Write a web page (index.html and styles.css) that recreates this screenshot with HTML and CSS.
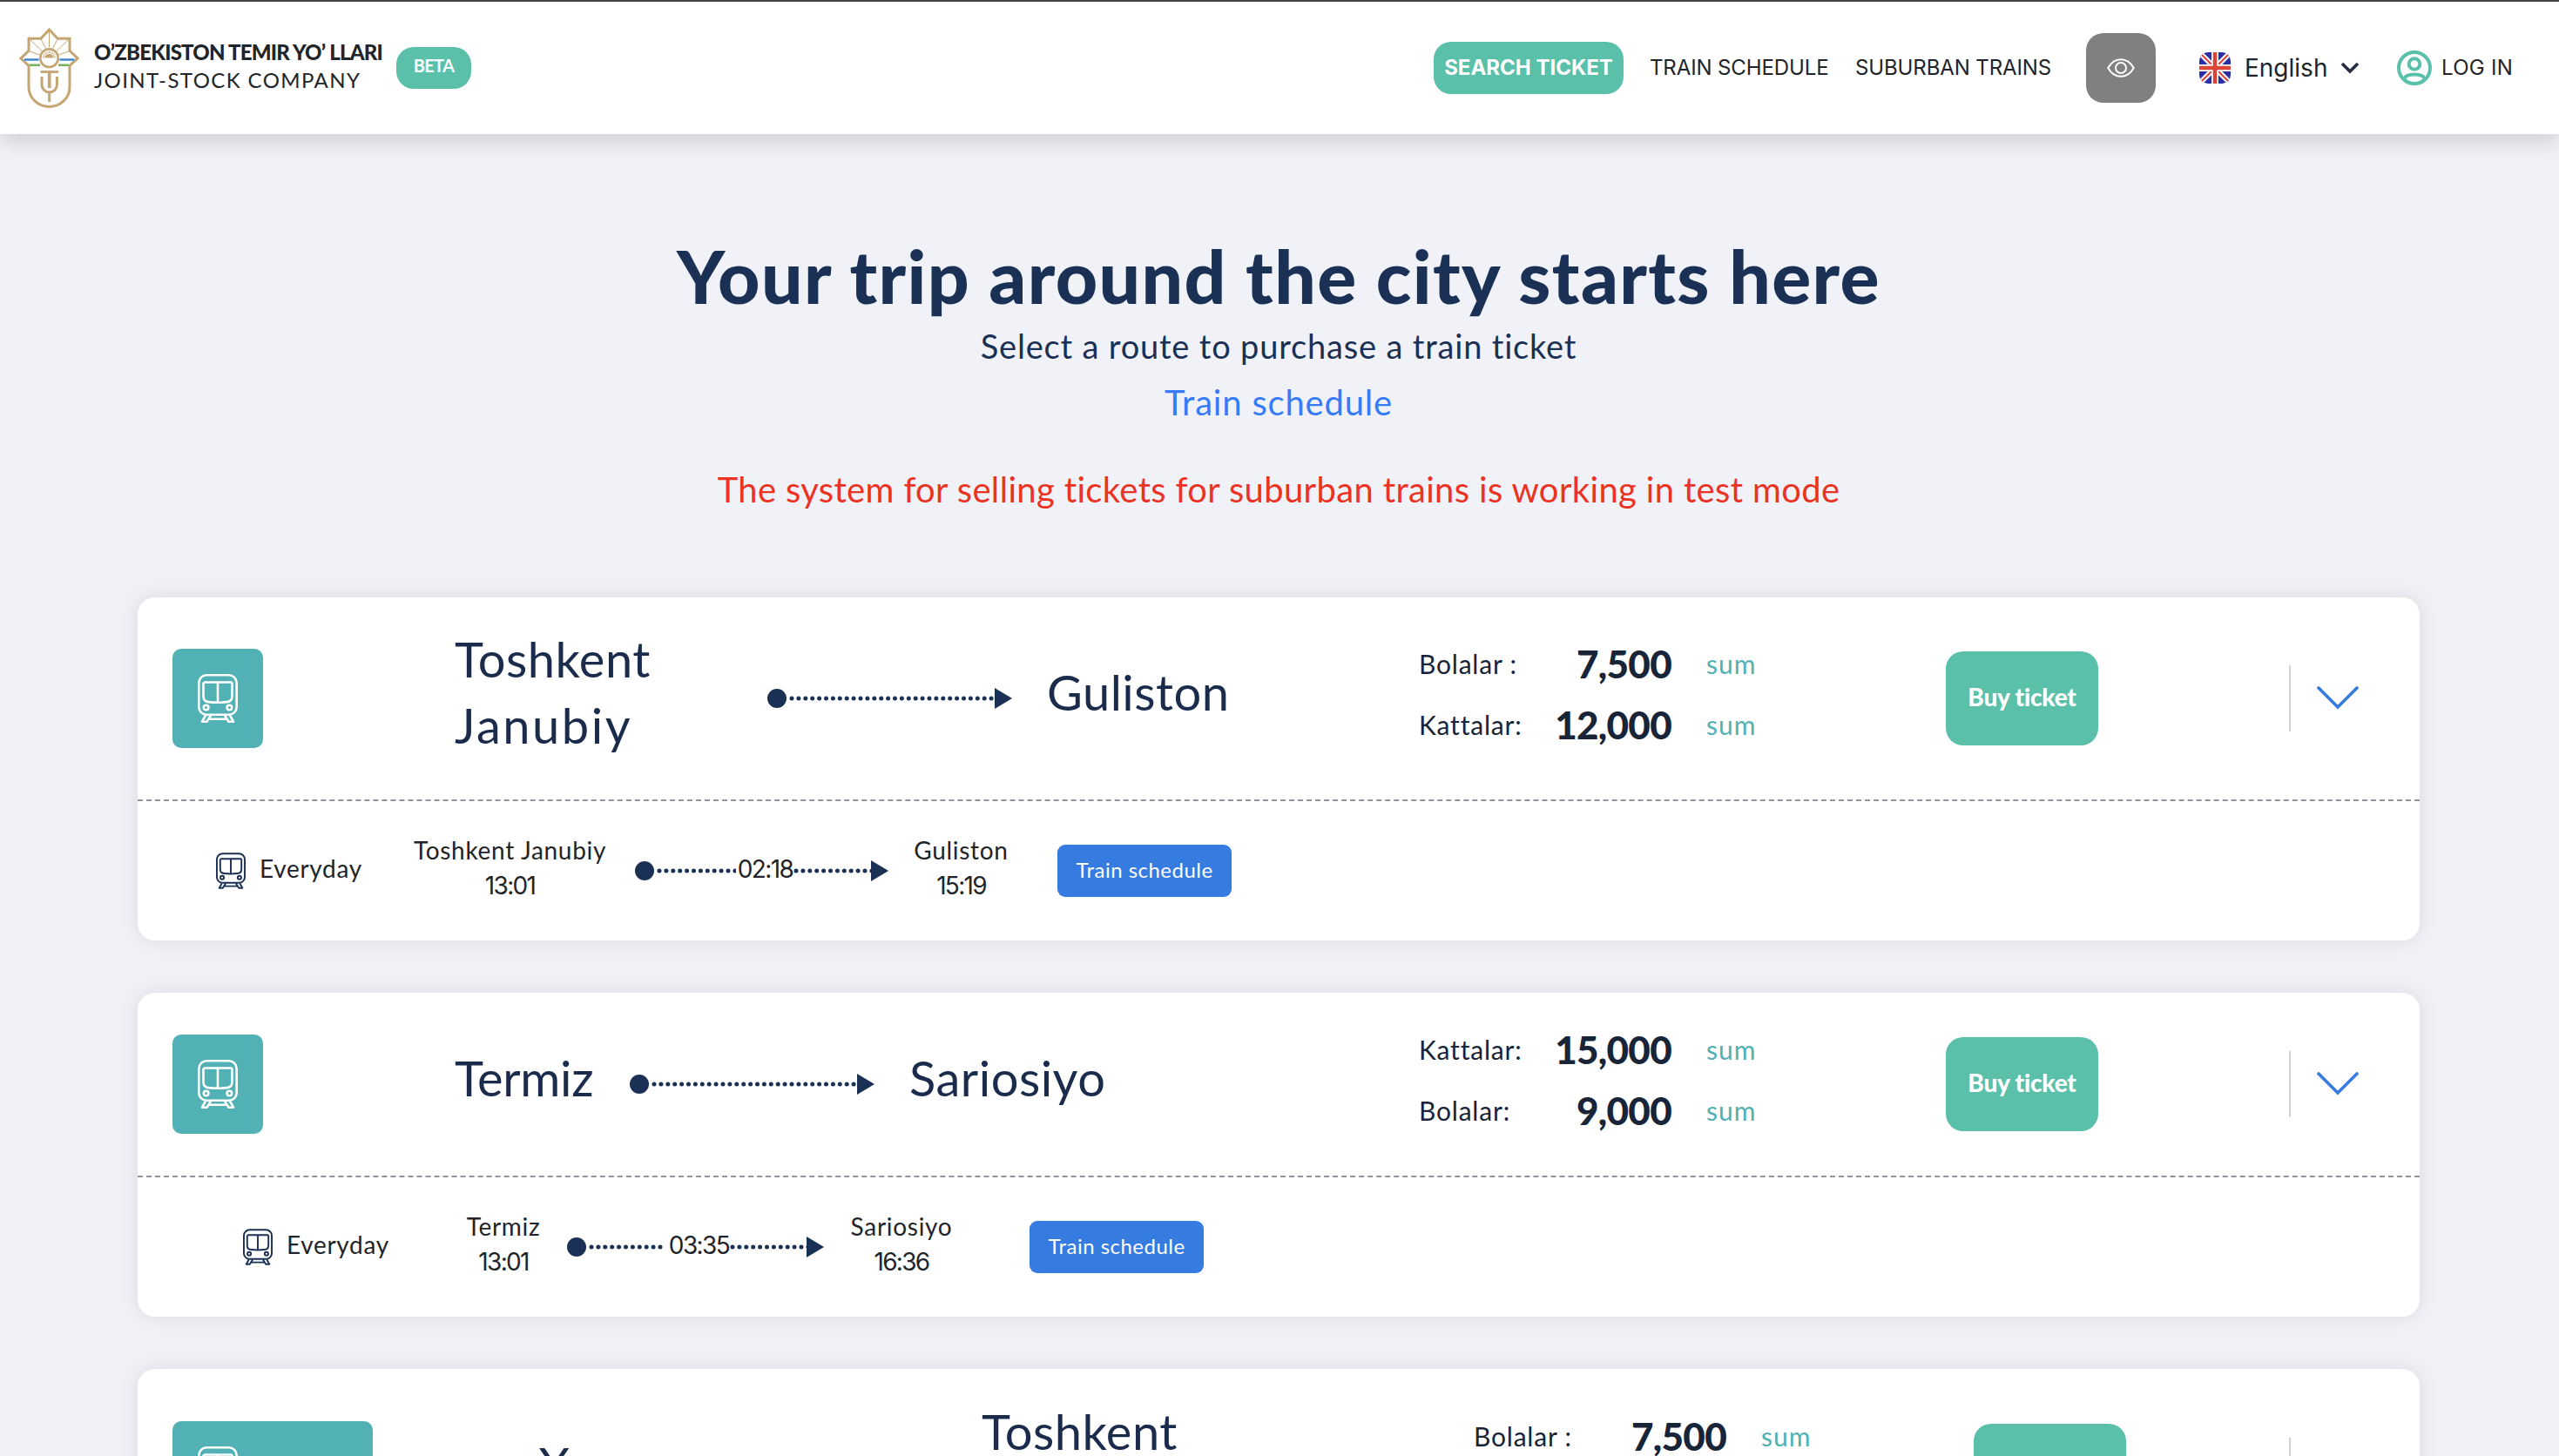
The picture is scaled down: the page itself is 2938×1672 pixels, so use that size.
FILE: index.html
```html
<!DOCTYPE html>
<html lang="en">
<head>
    <meta charset="UTF-8">
    <meta name="viewport" content="width=device-width, initial-scale=1.0">
    <title>Suburban trains</title>
    <link rel="stylesheet" href="styles.css">
</head>
<body>
    <!-- shared icons -->
    <svg class="icon-defs" width="0" height="0">
        <symbol id="icon-train" viewBox="0 0 46 56">
            <g fill="none" stroke="currentColor" stroke-width="2.6" stroke-linejoin="round">
                <rect x="1.3" y="1.3" width="43.4" height="45.4" rx="9"/>
                <path d="M7 9.500h32.500M6.500 9.500v16c0 4 2.200 6.300 6 6.600 7 .8 14 .8 21 0 3.800-.3 6-2.600 6-6.600v-16M23 9.500v23"/>
                <circle cx="9.600" cy="38.500" r="2.800"/>
                <circle cx="36.400" cy="38.500" r="2.800"/>
                <path d="M9 47.500l-4 7.200h5.500l4.500-7.200M37 47.500l4 7.200h-5.500L31 47.500M13.500 51.800h19"/>
            </g>
        </symbol>
    </svg>

    <header class="header">
        <div class="brand">
            <svg class="logo" viewBox="0 0 69 92">
                <g fill="none" stroke="#c5a571">
                    <path stroke-width="3" d="M34.500 2l9.500 10.200h14v14L67 35l-9 8.500V68a23.500 22.500 0 0 1-47 0V43.500L2 35l9-8.800v-14h14z"/>
                    <path stroke-width="1" d="M34.500 3v19M25 13l5.500 10.500M44 13l-5.500 10.500M12 13l14.500 14M57 13L42.500 27M12 27l11.500 4M57 27l-11.500 4"/>
                    <circle cx="34.500" cy="34.700" r="10.300" stroke-width="2.600"/>
                    <path stroke-width="2.800" d="M24.500 50.500h20.500"/>
                    <path stroke-width="3.600" d="M34.700 51v18"/>
                    <path stroke-width="3" d="M26 56v9.500a8.700 8.500 0 0 0 17.400 0V56M34.700 74v11"/>
                    <path stroke-width="2" stroke-dasharray="1 .9" d="M28 34.500a6.500 6.500 0 0 1 13 0"/>
                </g>
                <path fill="#c5a571" d="M29.500 34.500a5 4.500 0 0 1 10 0z"/>
                <path stroke="#3f86d0" stroke-width="2.700" d="M6 36.500h16.500M46.500 36.500H63"/>
                <path stroke="#76b55b" stroke-width="2.500" d="M12 42.700h12M45 42.700h12"/>
            </svg>
            <div class="brand-text">
                <div class="brand-name">O’ZBEKISTON TEMIR YO’ LLARI</div>
                <div class="brand-type">JOINT-STOCK COMPANY</div>
            </div>
            <span class="beta">BETA</span>
        </div>
        <nav class="nav">
            <a class="nav-btn">SEARCH TICKET</a>
            <a class="nav-link schedule">TRAIN SCHEDULE</a>
            <a class="nav-link suburban">SUBURBAN TRAINS</a>
            <button class="eye-btn">
                <svg width="32" height="22" viewBox="0 0 32 22" fill="none" stroke="#fff" stroke-width="2">
                    <path d="M1.200 11C5 4.500 10 1.200 16 1.200S27 4.500 30.800 11C27 17.500 22 20.800 16 20.800S5 17.500 1.200 11z"/>
                    <circle cx="16" cy="11" r="6"/>
                </svg>
            </button>
            <div class="lang">
                <svg class="flag" width="36" height="36" viewBox="0 0 36 36">
                    <rect width="36" height="36" fill="#2b2fa6"/>
                    <path d="M0 0l36 36M36 0L0 36" stroke="#fff" stroke-width="6"/>
                    <path d="M0 0l36 36M36 0L0 36" stroke="#dc4437" stroke-width="2"/>
                    <path d="M18 0v36M0 18h36" stroke="#fff" stroke-width="8"/>
                    <path d="M18 0v36M0 18h36" stroke="#dc4437" stroke-width="4.500"/>
                </svg>
                <span class="lang-name">English</span>
                <svg width="22" height="14" viewBox="0 0 22 14" fill="none" stroke="#272c45" stroke-width="3.600">
                    <path d="M2 2l9 9 9-9"/>
                </svg>
            </div>
            <a class="login">
                <svg width="40" height="40" viewBox="0 0 40 40" fill="none" stroke="#5ac0aa" stroke-width="4">
                    <circle cx="20" cy="20" r="18"/>
                    <circle cx="20" cy="15.500" r="6.300"/>
                    <path d="M8 33c1-4 6-5.500 12-5.500s11 1.500 12 5.500"/>
                </svg>
                <span>LOG IN</span>
            </a>
        </nav>
    </header>

    <section class="hero">
        <h1>Your trip around the city starts here</h1>
        <p class="subtitle">Select a route to purchase a train ticket</p>
        <a class="schedule-link">Train schedule</a>
        <p class="warning">The system for selling tickets for suburban trains is working in test mode</p>
    </section>

    <main class="list">
        <div class="card card-guliston">
            <div class="card-top">
                <div class="badge"><svg><use href="#icon-train"/></svg></div>
                <div class="route">
                    <div class="city from">Toshkent<br><span class="wide">Janubiy</span></div>
                    <div class="arrow">
                        <i class="dot"></i>
                        <svg class="dots"><line x1="6" y1="4" x2="100%" y2="4"/></svg>
                        <i class="tip"></i>
                    </div>
                    <div class="city">Guliston</div>
                </div>
                <div class="prices">
                    <div class="price"><span class="label">Bolalar :</span><b>7,500</b><span class="sum">sum</span></div>
                    <div class="price"><span class="label">Kattalar:</span><b>12,000</b><span class="sum">sum</span></div>
                </div>
                <button class="buy">Buy ticket</button>
                <div class="toggle">
                    <svg width="50" height="28" viewBox="0 0 50 28"><path d="M3 2l22 22L47 2"/></svg>
                </div>
            </div>
            <div class="card-bottom">
                <div class="days"><svg><use href="#icon-train"/></svg><span>Everyday</span></div>
                <div class="stop">Toshkent Janubiy<br><span class="time">13:01</span></div>
                <div class="arrow">
                    <i class="dot"></i>
                    <svg class="dots"><line x1="6" y1="4" x2="100%" y2="4"/></svg>
                    <span class="time duration">02:18</span>
                    <svg class="dots"><line x1="4" y1="4" x2="100%" y2="4"/></svg>
                    <i class="tip"></i>
                </div>
                <div class="stop">Guliston<br><span class="time">15:19</span></div>
                <button class="schedule-btn">Train schedule</button>
            </div>
        </div>

        <div class="card card-sariosiyo">
            <div class="card-top">
                <div class="badge"><svg><use href="#icon-train"/></svg></div>
                <div class="route">
                    <div class="city from">Termiz</div>
                    <div class="arrow">
                        <i class="dot"></i>
                        <svg class="dots"><line x1="6" y1="4" x2="100%" y2="4"/></svg>
                        <i class="tip"></i>
                    </div>
                    <div class="city">Sariosiyo</div>
                </div>
                <div class="prices">
                    <div class="price"><span class="label">Kattalar:</span><b>15,000</b><span class="sum">sum</span></div>
                    <div class="price"><span class="label">Bolalar:</span><b>9,000</b><span class="sum">sum</span></div>
                </div>
                <button class="buy">Buy ticket</button>
                <div class="toggle">
                    <svg width="50" height="28" viewBox="0 0 50 28"><path d="M3 2l22 22L47 2"/></svg>
                </div>
            </div>
            <div class="card-bottom">
                <div class="days"><svg><use href="#icon-train"/></svg><span>Everyday</span></div>
                <div class="stop">Termiz<br><span class="time">13:01</span></div>
                <div class="arrow">
                    <i class="dot"></i>
                    <svg class="dots"><line x1="6" y1="4" x2="100%" y2="4"/></svg>
                    <span class="time duration">03:35</span>
                    <svg class="dots"><line x1="4" y1="4" x2="100%" y2="4"/></svg>
                    <i class="tip"></i>
                </div>
                <div class="stop">Sariosiyo<br><span class="time">16:36</span></div>
                <button class="schedule-btn">Train schedule</button>
            </div>
        </div>

        <div class="card card-xovos">
            <div class="card-top">
                <div class="badge"><svg><use href="#icon-train"/></svg></div>
                <div class="route">
                    <div class="city from">Xovos</div>
                    <div class="arrow">
                        <i class="dot"></i>
                        <svg class="dots"><line x1="6" y1="4" x2="100%" y2="4"/></svg>
                        <i class="tip"></i>
                    </div>
                    <div class="city">Toshkent<br><span class="wide">Janubiy</span></div>
                </div>
                <div class="prices">
                    <div class="price"><span class="label">Bolalar :</span><b>7,500</b><span class="sum">sum</span></div>
                    <div class="price"><span class="label">Kattalar:</span><b>12,000</b><span class="sum">sum</span></div>
                </div>
                <button class="buy">Buy ticket</button>
                <div class="toggle">
                    <svg width="50" height="28" viewBox="0 0 50 28"><path d="M3 2l22 22L47 2"/></svg>
                </div>
            </div>
        </div>
    </main>
</body>
</html>
```
FILE: styles.css
```css
* {
    box-sizing: border-box;
}
html, body {
    height: 100%;
}
body {
    margin: 0;
    overflow: hidden;
    background: #f0f2f8;
    color: #212529;
    font-family: Lato, sans-serif;
}
button {
    border: none;
    padding: 0;
    font-family: inherit;
    cursor: pointer;
}
p, h1 {
    margin: 0;
}
.icon-defs {
    position: absolute;
}

/* header */
.header {
    display: flex;
    align-items: center;
    justify-content: space-between;
    height: 154px;
    border-top: 2px solid #444344;
    background: #fff;
    box-shadow: 0 8px 24px rgba(0, 0, 0, 0.15);
}
.brand {
    display: flex;
    align-items: center;
    padding-left: 22px;
}
.logo {
    width: 69px;
    height: 92px;
}
.brand-text {
    width: 347px;
    margin-left: 17px;
    padding-bottom: 5px;
    font-size: 24px;
    line-height: 32px;
    white-space: nowrap;
}
.brand-name {
    font-weight: 900;
    letter-spacing: -0.77px;
}
.brand-type {
    letter-spacing: 1.4px;
}
.beta {
    width: 86px;
    height: 48px;
    border-radius: 20px;
    background: #5ac0aa;
    color: #fff;
    font-size: 20px;
    font-weight: 700;
    letter-spacing: -0.7px;
    line-height: 43px;
    text-align: center;
}
.nav {
    display: flex;
    align-items: center;
    width: 1292px;
    font-family: Inter, sans-serif;
    font-size: 24px;
    white-space: nowrap;
}
.nav-btn {
    width: 218px;
    height: 60px;
    margin-right: 30px;
    border-radius: 20px;
    background: #5ac0aa;
    color: #fff;
    font-weight: 700;
    line-height: 59px;
    text-align: center;
}
.nav-link {
    padding-bottom: 1px;
    letter-spacing: -0.12px;
}
.schedule {
    width: 236px;
}
.suburban {
    width: 265px;
}
.eye-btn {
    display: flex;
    align-items: center;
    justify-content: center;
    width: 80px;
    height: 80px;
    border-radius: 20px;
    background: #808080;
}
.lang {
    display: flex;
    align-items: center;
    width: 227px;
    margin-left: 50px;
    font-size: 28px;
}
.flag {
    border-radius: 10px;
}
.lang-name {
    width: 110px;
    margin-left: 16px;
}
.login {
    display: flex;
    align-items: center;
    gap: 11px;
    letter-spacing: 0.3px;
}
.login span {
    padding-bottom: 1px;
}

/* hero */
.hero {
    display: flex;
    flex-direction: column;
    align-items: center;
    padding: 112px 2px 0 0;
    color: #1b3055;
    white-space: nowrap;
}
.hero h1 {
    font-size: 84px;
    font-weight: 900;
    line-height: 101px;
    letter-spacing: 1.35px;
}
.subtitle {
    font-size: 38px;
    line-height: 60px;
    letter-spacing: 0.82px;
}
.schedule-link {
    padding-top: 1px;
    color: #357cf6;
    font-size: 40px;
    line-height: 68px;
    letter-spacing: 0.8px;
}
.warning {
    margin-top: 36px;
    color: #eb3323;
    font-size: 40px;
    line-height: 60px;
    letter-spacing: 0.34px;
}

/* cards */
.list {
    display: flex;
    flex-direction: column;
    gap: 60px;
    width: 2620px;
    margin: 94px 0 0 158px;
}
.card {
    border-radius: 20px;
    background: #fff;
    box-shadow: 0 0 24px rgba(0, 0, 0, 0.1);
}
.card-top {
    display: grid;
    grid-template-columns: 362px 1109px 605px 394px 1fr;
    align-items: center;
    height: 234px;
    border-bottom: 2px dashed #8e939e;
}
.card-sariosiyo .card-top {
    height: 212px;
}
.card-xovos .card-top {
    grid-template-columns: 458px 1076px 574px 362px 1fr;
    border-bottom: none;
}
.badge {
    display: flex;
    align-items: center;
    width: 104px;
    height: 114px;
    margin-left: 40px;
    padding-left: 29px;
    border-radius: 10px;
    background: #51b1b4;
    color: #fff;
}
.badge svg {
    width: 46px;
    height: 56px;
}
.card-xovos .badge {
    width: 230px;
}
.route {
    display: flex;
    align-items: center;
}
.city {
    padding-bottom: 14px;
    color: #1a2b4b;
    font-size: 56px;
    line-height: 76px;
    letter-spacing: 0.5px;
}
.city .wide {
    letter-spacing: 2.5px;
}
.from {
    width: 361px;
    padding-left: 2px;
}
.card-sariosiyo .from {
    width: 203px;
    letter-spacing: -0.3px;
}
.card-xovos .from {
    width: 190px;
}
.route .arrow {
    width: 281px;
    margin-right: 40px;
}
.arrow {
    display: flex;
    align-items: center;
}
.dot {
    flex: none;
    width: 22px;
    height: 22px;
    border-radius: 50%;
    background: #1b3055;
}
.dots {
    flex: 1;
    width: 0;
    height: 8px;
}
.dots line {
    stroke: #1b3055;
    stroke-width: 5px;
    stroke-linecap: round;
    stroke-dasharray: 0 7.9;
}
.tip {
    border-left: 20px solid #1b3055;
    border-top: 12px solid transparent;
    border-bottom: 12px solid transparent;
}
.prices {
    padding-bottom: 10px;
}
.price {
    display: flex;
    align-items: center;
    height: 70px;
    color: #182437;
    font-size: 30px;
}
.price .label {
    width: 130px;
    letter-spacing: 0.8px;
}
.price b {
    width: 160px;
    font-size: 44px;
    font-weight: 900;
    letter-spacing: -0.7px;
    text-align: right;
}
.price .sum {
    margin-left: 40px;
    color: #51b1b4;
    letter-spacing: 1px;
}
.buy {
    width: 175px;
    height: 108px;
    padding-bottom: 4px;
    border-radius: 20px;
    background: #5ac0aa;
    color: #fff;
    font-size: 28px;
    font-weight: 900;
    letter-spacing: -0.2px;
}
.toggle {
    display: flex;
    align-items: center;
    height: 76px;
    padding-left: 29px;
    border-left: 2px solid #d0d3dd;
}
.toggle path {
    fill: none;
    stroke: #367be0;
    stroke-width: 3.6px;
    stroke-linecap: round;
}

/* trip details */
.card-bottom {
    display: grid;
    grid-template-columns: 194px 287px 291px 194px auto;
    align-items: center;
    justify-content: start;
    height: 160px;
    padding-left: 90px;
    font-size: 28px;
    letter-spacing: 0.7px;
}
.card-sariosiyo .card-bottom {
    grid-template-columns: 226px 146px 295px 236px auto;
    padding-left: 121px;
}
.days {
    display: flex;
    align-items: center;
    gap: 16px;
}
.days svg {
    width: 34px;
    height: 42px;
    color: #1b3055;
}
.days span {
    padding-bottom: 6px;
}
.stop {
    padding-bottom: 7px;
    line-height: 40px;
    text-align: center;
    white-space: nowrap;
}
.arrow + .stop {
    padding-right: 27px;
}
.card-sariosiyo .arrow + .stop {
    padding-right: 58px;
}
.time {
    font-family: Inter, sans-serif;
    letter-spacing: -1.7px;
}
.duration {
    padding: 0 0 5px 2px;
    letter-spacing: -1.6px;
}
.duration + .dots {
    margin-right: -4px;
}
.schedule-btn {
    width: 200px;
    height: 60px;
    padding-bottom: 4px;
    border-radius: 9px;
    background: #367be0;
    color: #fff;
    font-size: 24px;
    letter-spacing: 0.48px;
}
```
